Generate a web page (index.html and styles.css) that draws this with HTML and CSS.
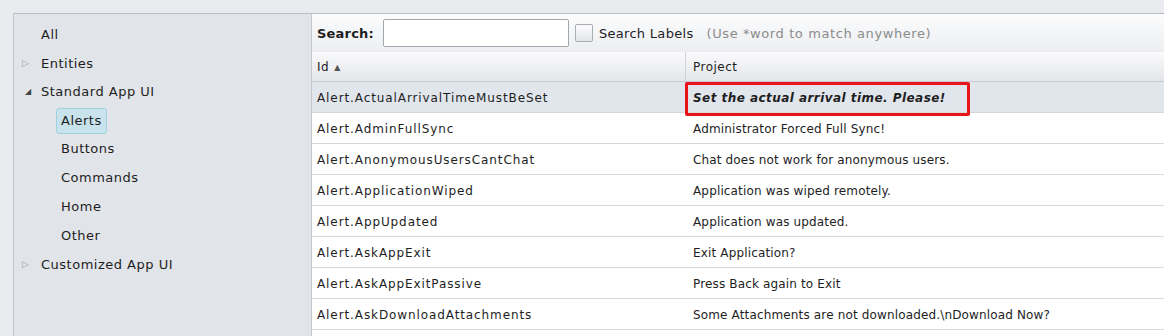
FILE: index.html
```html
<!DOCTYPE html>
<html lang="en">
<head>
    <meta charset="UTF-8">
    <title>Labels</title>
    <link rel="stylesheet" href="styles.css">
</head>
<body>
    <div class="app">
        <div class="tree">
            <div class="node"><span class="arrow"></span>All</div>
            <div class="node"><span class="arrow closed">&#9655;</span>Entities</div>
            <div class="node"><span class="arrow open">&#9698;</span>Standard App UI</div>
            <div class="node child"><span class="selected">Alerts</span></div>
            <div class="node child"><span>Buttons</span></div>
            <div class="node child"><span>Commands</span></div>
            <div class="node child"><span>Home</span></div>
            <div class="node child"><span>Other</span></div>
            <div class="node"><span class="arrow closed">&#9655;</span>Customized App UI</div>
        </div>

        <div class="grid">
            <div class="searchbar">
                <label class="search-label" for="search">Search:</label>
                <input type="text" id="search" class="search-input">
                <span class="checkbox"></span>
                <span class="check-text">Search Labels</span>
                <span class="hint">(Use *word to match anywhere)</span>
            </div>
            <div class="row header">
                <div class="cell">Id <span class="sort">&#9650;</span></div>
                <div class="cell">Project</div>
            </div>
            <div class="row current">
                <div class="cell">Alert.ActualArrivalTimeMustBeSet</div>
                <div class="cell emphasis">Set the actual arrival time. Please!<span class="callout"></span></div>
            </div>
            <div class="row">
                <div class="cell">Alert.AdminFullSync</div>
                <div class="cell">Administrator Forced Full Sync!</div>
            </div>
            <div class="row">
                <div class="cell">Alert.AnonymousUsersCantChat</div>
                <div class="cell">Chat does not work for anonymous users.</div>
            </div>
            <div class="row">
                <div class="cell">Alert.ApplicationWiped</div>
                <div class="cell">Application was wiped remotely.</div>
            </div>
            <div class="row">
                <div class="cell">Alert.AppUpdated</div>
                <div class="cell">Application was updated.</div>
            </div>
            <div class="row">
                <div class="cell">Alert.AskAppExit</div>
                <div class="cell">Exit Application?</div>
            </div>
            <div class="row">
                <div class="cell">Alert.AskAppExitPassive</div>
                <div class="cell">Press Back again to Exit</div>
            </div>
            <div class="row">
                <div class="cell">Alert.AskDownloadAttachments</div>
                <div class="cell">Some Attachments are not downloaded.\nDownload Now?</div>
            </div>
            <div class="row">
                <div class="cell"></div>
                <div class="cell"></div>
            </div>
        </div>
    </div>
</body>
</html>
```

FILE: styles.css
```css
body {
    margin: 0;
    background: #e9ebee;
    font-family: "DejaVu Sans", Verdana, sans-serif;
    font-size: 12px;
    color: #1e1e1e;
    overflow: hidden;
}
.app {
    display: flex;
    padding: 13px 0 0 13px;
    height: 336px;
    box-sizing: border-box;
}
.tree {
    width: 297px;
    flex: none;
    background: #e1e4e9;
    border-top: 1px solid #b9bdc3;
    border-left: 1px solid #c2c6cc;
    border-right: 1px solid #c6cad0;
    padding-top: 6px;
    font-size: 13px;
    letter-spacing: 0.5px;
}
.node {
    height: 28.75px;
    display: flex;
    align-items: center;
    padding-left: 8px;
}
.arrow {
    width: 19px;
    font-size: 9px;
    color: #9a9ea4;
    letter-spacing: 0;
}
.arrow.open {
    color: #444;
    font-size: 8px;
    width: 16px;
    padding-left: 3px;
}
.node.child {
    padding-left: 42px;
}
.node.child span {
    padding: 0 4px;
    line-height: 24px;
    border: 1px solid transparent;
    border-radius: 3px;
}
.node.child .selected {
    background: #c8e3ec;
    border-color: #a3d1de;
}
.grid {
    flex: 1;
    background: #fff;
    border-top: 1px solid #b9bdc3;
    overflow: hidden;
}
.searchbar {
    height: 38px;
    display: flex;
    align-items: center;
    padding-left: 5px;
    background: linear-gradient(#fcfcfd, #eceef1);
    white-space: nowrap;
    font-size: 13px;
}
.search-label {
    font-weight: bold;
    letter-spacing: 0.2px;
    margin-right: 9px;
}
.search-input {
    width: 184px;
    height: 26px;
    box-sizing: content-box;
    padding: 0;
    border: 1px solid #a3a7ad;
    border-radius: 2px;
    background: #fff;
    margin-right: 6px;
}
.checkbox {
    width: 16px;
    height: 16px;
    border: 1px solid #a9adb3;
    border-radius: 2px;
    background: linear-gradient(#fbfbfc, #e4e6ea);
    margin-right: 6px;
}
.check-text {
    letter-spacing: 0.3px;
    margin-right: 13px;
}
.hint {
    color: #8c8c8c;
    letter-spacing: 0.6px;
}
.row {
    display: grid;
    grid-template-columns: 374px 1fr;
    height: 30px;
    border-bottom: 1px solid #d8d9db;
}
.row.header {
    height: 29px;
    background: linear-gradient(#fafafb, #e4e6e9);
    border-bottom: 1px solid #c7cacf;
}
.row.header .cell:first-child {
    border-right: 1px solid #cfd2d6;
}
.row.header .cell {
    letter-spacing: 0.5px;
    padding-top: 1px;
}
.sort {
    font-size: 8px;
    color: #555;
    margin-left: 5px;
}
.row.current {
    background: #e1e5ec;
}
.cell {
    display: flex;
    align-items: center;
    padding-left: 7px;
    white-space: nowrap;
    position: relative;
    padding-top: 2px;
    letter-spacing: 0.15px;
}
.cell:first-child {
    padding-left: 5px;
    letter-spacing: 0.9px;
}
.cell.emphasis {
    font-weight: bold;
    font-style: italic;
    letter-spacing: 0.45px;
}
.callout {
    position: absolute;
    left: -1px;
    top: 0;
    width: 279px;
    height: 28px;
    border: 3px solid #e8141a;
    border-radius: 2px;
}
```
